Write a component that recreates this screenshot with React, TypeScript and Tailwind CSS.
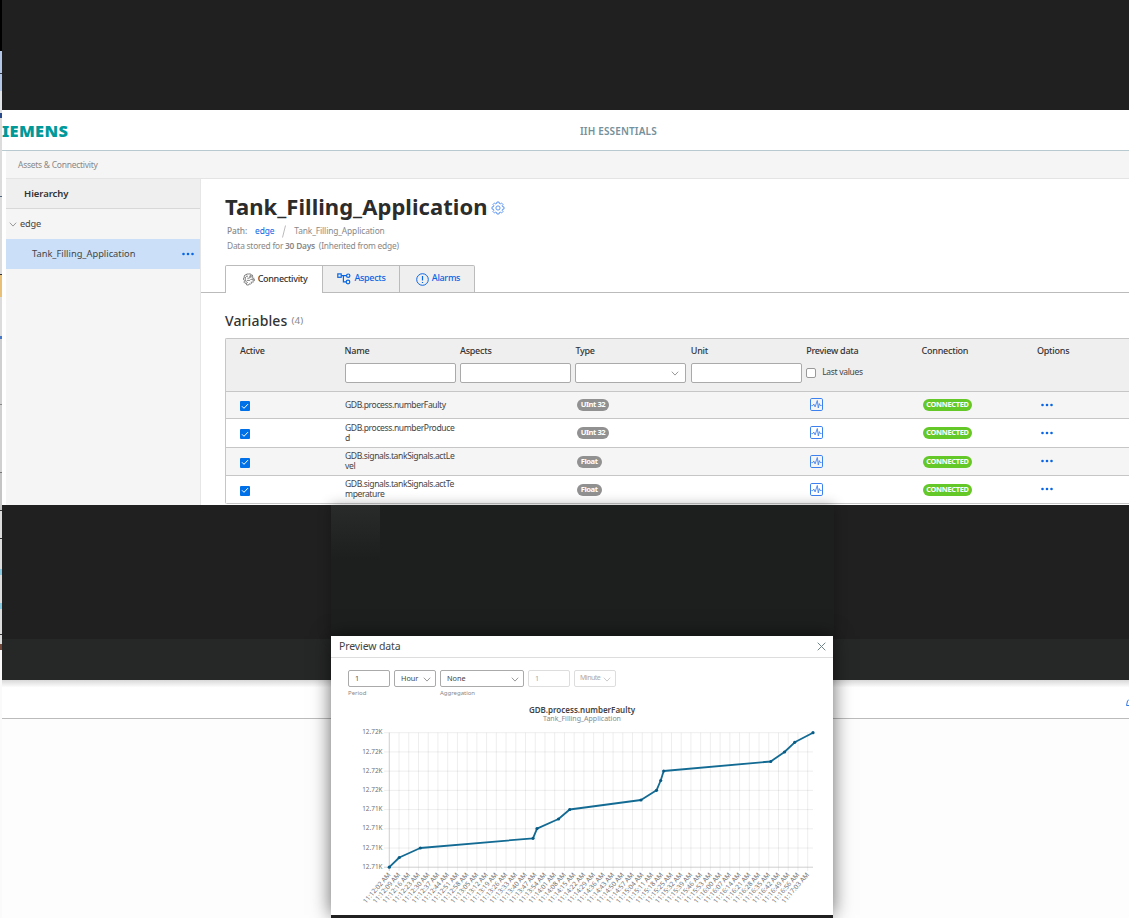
import React from "react";

const xLabels = Array.from({ length: 44 }, (_, i) => {
  const s = 12 * 60 + 2 + i * 7;
  const p = (n: number) => String(n).padStart(2, "0");
  return `11:${p(Math.floor(s / 60))}:${p(s % 60)} AM`;
});
const yLabels = ["12.72K", "12.72K", "12.72K", "12.72K", "12.71K", "12.71K", "12.71K", "12.71K"];
const points = [
  [389.3, 867.2], [399.3, 857.5], [420.3, 848], [533, 838.3], [537, 828.6], [558.5, 819], [569.7, 809.5],
  [641, 800], [656.5, 790.3], [660.7, 780.5], [663.7, 771], [770.7, 761.5], [784.5, 752], [794.7, 742.3], [813, 732.7],
];
const rows = [
  { name: ["GDB.process.numberFaulty"], type: "UInt 32", h: "h-[26px]", bg: "bg-[#f5f5f5]" },
  { name: ["GDB.process.numberProduce", "d"], type: "UInt 32", h: "h-[28px]", bg: "bg-white" },
  { name: ["GDB.signals.tankSignals.actLe", "vel"], type: "Float", h: "h-[27px]", bg: "bg-[#f5f5f5]" },
  { name: ["GDB.signals.tankSignals.actTe", "mperature"], type: "Float", h: "h-[27px]", bg: "bg-white" },
];
const strip = [
  ["h-[51px]", "bg-black"], ["h-[22px]", "bg-[#b5c7e6]"], ["h-px", "bg-[#303848]"], ["h-[17px]", "bg-[#b5c7e6]"], ["h-[22px]", "bg-[#dfe3e6]"],
  ["h-[5px]", "bg-[#294b8b]"], ["h-[78px]", "bg-[#dcdcdc]"], ["h-px", "bg-[#52647d]"], ["h-[77px]", "bg-[#dcdcdc]"],
  ["h-px", "bg-[#333]"], ["h-[22px]", "bg-[#e8c078]"], ["h-[39px]", "bg-[#dcdcdc]"], ["h-[3px]", "bg-[#4878c8]"],
  ["h-[65px]", "bg-[#d0d0d0]"], ["h-px", "bg-[#888]"], ["h-[67px]", "bg-[#d0d0d0]"], ["h-px", "bg-[#777]"],
  ["h-[37px]", "bg-[#c5c5c5]"], ["h-px", "bg-[#333]"], ["h-[27px]", "bg-[#dcdcdc]"], ["h-px", "bg-[#333]"],
  ["h-[30px]", "bg-[#dcdcdc]"], ["h-[6px]", "bg-[#8bcbe2]"], ["h-[28px]", "bg-[#dcdcdc]"], ["h-[6px]", "bg-[#8bcbe2]"],
  ["h-[25px]", "bg-[#dcdcdc]"], ["h-px", "bg-[#333]"], ["h-[9px]", "bg-[#dcdcdc]"], ["h-[6px]", "bg-[#754b3e]"], ["h-[268px]", "bg-[#fafafa]"],
];

function Dots() {
  return (
    <svg className="block" width="12" height="4" viewBox="0 0 12 4" fill="#0866e6">
      <circle cx="1.5" cy="2" r="1.3" /><circle cx="6" cy="2" r="1.3" /><circle cx="10.5" cy="2" r="1.3" />
    </svg>
  );
}

function Chevron({ className = "", color = "#999" }: { className?: string; color?: string }) {
  return (
    <svg className={className} width="8" height="5" viewBox="0 0 8 5" fill="none" stroke={color} strokeWidth="1">
      <path d="M.8.7 4 4.1 7.2.7" />
    </svg>
  );
}

function Cog({ className = "" }: { className?: string }) {
  const teeth = Array.from({ length: 8 }, (_, i) => {
    const base = (i * Math.PI) / 4;
    return [[-0.28, 4.7], [-0.18, 6.1], [0.18, 6.1], [0.28, 4.7]]
      .map(([a, r]) => `${(7 + r * Math.sin(base + a)).toFixed(2)} ${(7 - r * Math.cos(base + a)).toFixed(2)}`)
      .join("L");
  }).join("L");
  return (
    <svg className={className} width="14" height="14" viewBox="0 0 14 14" fill="none" stroke="#4f8cf0" strokeWidth=".9" strokeLinejoin="round">
      <path d={`M${teeth}Z`} /><circle cx="7" cy="7" r="2.1" />
    </svg>
  );
}

function ConnectivityIcon() {
  return (
    <svg className="mr-[3px] shrink-0" width="12" height="13" viewBox="0 0 12 13" fill="none" stroke="#666" strokeWidth=".8" strokeLinejoin="round">
      <path d="M5.2 1 3.7 1 3.3 2.1 2.1 1.8 1.1 3.2 1.8 4.2.6 4.8.6 6.8M5 3.1C3 3.2 2.2 4.3 2.2 6S3 9 4.8 9.7M.6 6.8 1.7 7.8.9 9.1 2 10.3 3.2 9.9 3.7 12 5.7 12 6.2 10.8 7.5 11.2 8.6 10.1 8 8.8" />
      <path d="M5.2 1 7.6.9 8.2 2.1 9.3 2 9.9 3.3 9 4.1 9.5 5.2 11.3 5.2M4.3 5.2h2.1L7.4 3.4M3.8 7.4h3l1.1-1.1h2M8.5 9h2.2" />
      <circle cx="10.7" cy="7" r=".9" /><circle cx="7.5" cy="3.3" r=".8" />
    </svg>
  );
}

function AspectsIcon() {
  return (
    <svg className="mr-[3px] shrink-0" width="14" height="12" viewBox="0 0 14 12" fill="none" stroke="#0866e6" strokeWidth="1.2">
      <rect x=".8" y=".9" width="3.4" height="3.4" /><path d="M4.2 2.7h5.1M6.4 2.7v6.2h2.8" />
      <circle cx="11.2" cy="2.7" r="1.7" /><circle cx="11" cy="9" r="1.8" />
    </svg>
  );
}

function PreviewIcon() {
  return (
    <svg className="block" width="13" height="13" viewBox="0 0 13 13" fill="none" stroke="#3d80ef" strokeWidth="1" strokeLinejoin="round">
      <rect x=".5" y=".5" width="12" height="12" rx="1.3" />
      <path d="M1.4 7.6h1.4l1-1.5 1.3 2.8L7.3 2.5 8.3 10 9.3 5.6l.9 1.9h1.4" strokeWidth=".85" />
    </svg>
  );
}

function HeadCell({ label, children }: { label: string; children?: React.ReactNode }) {
  return (
    <div className="w-[115.4px] shrink-0">
      <div className="h-[24px] text-[9px] leading-[24px] font-medium tracking-[-0.24px] text-[#333]">{label}</div>
      {children}
    </div>
  );
}

function TableHeader() {
  const input = "h-[20px] w-[111px] rounded-[2px] border border-[#aaa] bg-white";
  return (
    <div className="flex h-[53px] shrink-0 border-b border-[#c6c6c6] bg-[#efefef]">
      <div className="ml-[14px] w-[104.6px] shrink-0 text-[9px] leading-[24px] font-medium tracking-[-0.24px] text-[#333]">Active</div>
      <HeadCell label="Name"><div className={input} /></HeadCell>
      <HeadCell label="Aspects"><div className={input} /></HeadCell>
      <HeadCell label="Type"><div className={`${input} flex items-center justify-end pr-[6px]`}><Chevron /></div></HeadCell>
      <HeadCell label="Unit"><div className={input} /></HeadCell>
      <HeadCell label="Preview data">
        <div className="flex h-[20px] items-center">
          <div className="size-[10px] rounded-[2px] border border-[#999] bg-white" />
          <span className="-mt-px ml-[6px] text-[8.5px] tracking-[-0.3px] text-[#444]">Last values</span>
        </div>
      </HeadCell>
      <HeadCell label="Connection" />
      <HeadCell label="Options" />
    </div>
  );
}

function TableRow({ row }: { row: (typeof rows)[number] }) {
  return (
    <div className={`box-content flex shrink-0 items-center border-b border-[#c6c6c6] ${row.h} ${row.bg}`}>
      <div className="ml-[14px] w-[105px] shrink-0">
        <div className="mt-[2px] flex size-[10px] items-center justify-center rounded-[1px] bg-[#0070e8]">
          <svg width="8" height="7" viewBox="0 0 8 7" fill="none" stroke="white" strokeWidth="1"><path d="m1 3.3 2 2L7 1.1" /></svg>
        </div>
      </div>
      <div className="-mt-px w-[230.8px] shrink-0 text-[8.6px] leading-[10px] tracking-[-0.4px] text-[#444]">
        {row.name.map((line) => <div key={line}>{line}</div>)}
      </div>
      <div className="w-[230.8px] shrink-0 pl-[1px]">
        <span className="flex h-[12px] w-fit items-center rounded-full bg-[#919191] px-[4px] text-[7.6px] leading-none font-bold tracking-[-0.45px] text-white">{row.type}</span>
      </div>
      <div className="-mt-px w-[115.4px] shrink-0 pl-[3px]"><PreviewIcon /></div>
      <div className="w-[115.4px] shrink-0 pl-[1px]">
        <span className="flex h-[12px] w-[49px] items-center justify-center rounded-full bg-[#64c828] text-[7.3px] leading-none font-bold tracking-[-0.25px] text-white">CONNECTED</span>
      </div>
      <div className="-mt-px pl-[4px]"><Dots /></div>
    </div>
  );
}

function Sidebar() {
  return (
    <aside className="flex w-[195px] shrink-0 flex-col border-r border-[#e6e6e6] bg-[#f5f5f5] text-[#444]">
      <div className="h-[30px] border-b border-[#d8d8d8] bg-[#efefef] pl-[18px] text-[9.5px] leading-[29px] font-semibold tracking-[-0.05px] text-[#333]">Hierarchy</div>
      <div className="flex h-[30px] items-center pl-[3px] text-[9.2px] tracking-[-0.2px]"><Chevron /><span className="ml-[3px]">edge</span></div>
      <div className="flex h-[30px] items-center justify-between bg-[#cbe0f8] pr-[6px] pl-[26px] text-[9.3px]"><span>Tank_Filling_Application</span><Dots /></div>
    </aside>
  );
}

function Content() {
  return (
    <main className="flex min-w-0 flex-1 flex-col bg-white">
      <div className="mt-[14px] ml-[24px] flex h-[28px] items-center">
        <h1 className="-mt-[3px] text-[22px] leading-none font-bold tracking-[0.04px] whitespace-nowrap text-[#2c2c2c]">Tank_Filling_Application</h1>
        <Cog className="mt-[2px] ml-[3px]" />
      </div>
      <div className="ml-[26px] flex h-[20px] items-center pt-[1px] text-[8.4px] tracking-[-0.12px] text-[#888]">
        <span className="font-medium">Path:</span><span className="ml-[8px] text-[#0866e6]">edge</span>
        <svg className="mx-[8px]" width="4" height="13" viewBox="0 0 4 13"><path d="M3.5.5.5 12.5" stroke="#bbb" /></svg>
        <span>Tank_Filling_Application</span>
      </div>
      <div className="ml-[26px] h-[12px] text-[8.4px] leading-[10px] tracking-[-0.23px] whitespace-pre text-[#888]">Data stored for <b className="font-semibold">30 Days</b>{"  (Inherited from edge)"}</div>
      <div className="mt-[12px] flex h-[28px] shrink-0 text-[9px] font-medium tracking-[-0.3px]">
        <div className="w-[24px] border-b border-[#bbb]" />
        <div className="flex w-[98px] items-center justify-center rounded-tl-[2px] border-t border-r border-l border-[#bbb] pb-px pl-[2px] text-[#333]"><ConnectivityIcon /><span className="-mt-px">Connectivity</span></div>
        <div className="flex w-[77px] items-center justify-center border-t border-r border-b border-[#bbb] bg-[#efefef] pl-px text-[#0866e6]"><AspectsIcon /><span className="-mt-[2px]">Aspects</span></div>
        <div className="flex w-[75px] items-center justify-center rounded-tr-[2px] border-t border-r border-b border-[#bbb] bg-[#efefef] pl-[2px] text-[#0866e6]">
          <svg className="mr-[3px]" width="13" height="13" viewBox="0 0 13 13" fill="none" stroke="#0866e6"><circle cx="6.5" cy="6.5" r="5.8" /><path d="M6.5 3v4.5M6.5 9v1.1" strokeWidth="1.2" /></svg><span className="-mt-[2px]">Alarms</span>
        </div>
        <div className="flex-1 border-b border-[#bbb]" />
      </div>
      <div className="ml-[24px] flex h-[45px] shrink-0 items-center pt-[9px] text-[14px] font-medium tracking-[0.12px] text-[#333]">Variables<span className="mt-[3px] ml-[4px] text-[9.8px] font-normal text-[#888]">(4)</span></div>
      <div className="ml-[24px] flex flex-col overflow-hidden rounded-l-[2px] border-t border-l border-[#c6c6c6]">
        <TableHeader />
        {rows.map((row) => <TableRow key={row.name[0]} row={row} />)}
      </div>
    </main>
  );
}

function Chart() {
  return (
    <svg className="block" width="502" height="190" viewBox="331 725 502 190" fontFamily="Noto Sans">
      <g stroke="#000" strokeOpacity=".07" strokeWidth="1">
        {yLabels.map((_, i) => <path key={i} d={`M384 ${732.7 + i * 19.22}H813`} />)}
        {xLabels.map((_, i) => <path key={i} d={`M${389.3 + i * 9.73} 732.7V871`} />)}
      </g>
      <path d="M389.3 732.7V871M384 867.2H813" stroke="#bbb" strokeOpacity=".55" />
      <g fontSize="6.4" fill="#707070" textAnchor="end">
        {yLabels.map((label, i) => <text key={i} x="382.5" y={734.3 + i * 19.22}>{label}</text>)}
        {xLabels.map((label, i) => (
          <text key={label} x="0" y="0" fontSize="6.6" transform={`translate(${391 + i * 9.73} 875) rotate(-49)`}>{label}</text>
        ))}
      </g>
      <polyline points={points.map((p) => p.join(",")).join(" ")} fill="none" stroke="#136b94" strokeWidth="1.8" strokeLinejoin="round" />
      <g fill="#075c86">{points.map(([x, y]) => <circle key={x} cx={x} cy={y} r="1.6" />)}</g>
    </svg>
  );
}

function PreviewDialog() {
  const box = "flex h-[17px] items-center rounded-[2px] border px-[6px] text-[7.3px]";
  return (
    <section className="absolute top-[636px] left-[331px] flex h-[279px] w-[502px] flex-col bg-white shadow-[0_0_18px_rgba(0,0,0,.6)]">
      <div className="flex h-[22px] shrink-0 items-center justify-between border-b border-[#ddd] pr-[7px] pl-[8px] text-[10.5px] tracking-[-0.12px] text-[#444]">
        <span>Preview data</span>
        <svg width="9" height="9" viewBox="0 0 9 9" fill="none" stroke="#70848c"><path d="m.7.7 7.6 7.6m0-7.6L.7 8.3" /></svg>
      </div>
      <div className="mt-[12px] ml-[17px] flex h-[29px] shrink-0">
        <div className="mr-[4px] w-[42px]"><div className={`${box} border-[#aaa] text-[#555]`}>1</div><div className="mt-[2px] text-[6px] leading-[9px] text-[#888]">Period</div></div>
        <div className={`${box} mr-[4px] w-[42px] justify-between border-[#aaa] pr-[4px]! text-[#444]`}>Hour<Chevron className="mt-[2px]" /></div>
        <div className="mr-[4px] w-[84px]"><div className={`${box} justify-between border-[#aaa] pr-[4px]! text-[#444]`}>None<Chevron className="mt-[2px]" /></div><div className="mt-[2px] text-[6px] leading-[9px] text-[#888]">Aggregation</div></div>
        <div className={`${box} mr-[4px] w-[42px] border-[#ddd] text-[#aaa]`}>1</div>
        <div className={`${box} w-[42px] justify-between border-[#ddd] pr-[4px]! pl-[5px]! text-[#aaa]`}><span className="text-[7px] tracking-[-0.5px]">Minute</span><Chevron className="mt-[2px]" color="#ccc" /></div>
      </div>
      <div className="h-[26px] shrink-0 pt-[6px] text-center text-[8px] leading-[10px] font-semibold text-[#444]">GDB.process.numberFaulty<div className="text-[7px] leading-[8px] font-normal text-[#888]">Tank_Filling_Application</div></div>
      <Chart />
    </section>
  );
}

export default function App() {
  return (
    <div className="relative flex h-[918px] w-[1129px] overflow-hidden bg-white font-['Noto_Sans',sans-serif]">
      <div className="flex w-[2px] shrink-0 flex-col">{strip.map(([h, bg], i) => <div key={i} className={`w-[2px] shrink-0 ${h} ${bg}`} />)}</div>
      <div className="flex min-w-0 flex-1 flex-col">
        <div className="h-[110px] shrink-0 bg-[#202020]" />
        <header className="flex h-[41px] shrink-0 items-center border-b border-[#b9c9d0] bg-white pt-[2px]">
          <div className="w-[70px] text-[16.4px] leading-[20px] font-black tracking-[0.35px] text-[#009999]">IEMENS</div>
          <div className="ml-[508px] text-[10px] font-semibold tracking-[0.15px] text-[#75909a]">IIH ESSENTIALS</div>
        </header>
        <div className="flex h-[354px] shrink-0 flex-col overflow-hidden pl-[4px]">
          <div className="h-[28px] shrink-0 border-b border-[#e4e4e4] bg-[#f5f5f5] pl-[12px] text-[8.5px] leading-[27px] tracking-[-0.27px] text-[#888]">Assets &amp; Connectivity</div>
          <div className="flex min-h-0 flex-1"><Sidebar /><Content /></div>
        </div>
        <div className="h-[134px] shrink-0 bg-[#202020]" />
        <div className="h-[41px] shrink-0 bg-[#262727]" />
        <div className="flex h-[39px] shrink-0 items-center justify-end border-b border-[#bbb] bg-linear-to-b from-[#d8d8d8] via-white via-20% to-white">
          <svg className="mt-[6px]" width="3" height="7" viewBox="0 0 3 7" fill="none" stroke="#3878e6"><path d="M3 .5 1.5 2 .5 6.5H3" /></svg>
        </div>
        <div className="flex-1 bg-[#fdfdfd]" />
      </div>
      <div className="absolute top-[505px] left-[331px] h-[131px] w-[503px] bg-[#1d1e1e] shadow-[0_0_12px_rgba(0,0,0,.3)]">
        <div className="h-[54px] w-[49px] bg-linear-to-b from-[#292a2a] to-[#1d1e1e]" />
      </div>
      <PreviewDialog />
      <div className="absolute bottom-0 left-[331px] h-[3px] w-[502px] bg-[#202020]" />
    </div>
  );
}
